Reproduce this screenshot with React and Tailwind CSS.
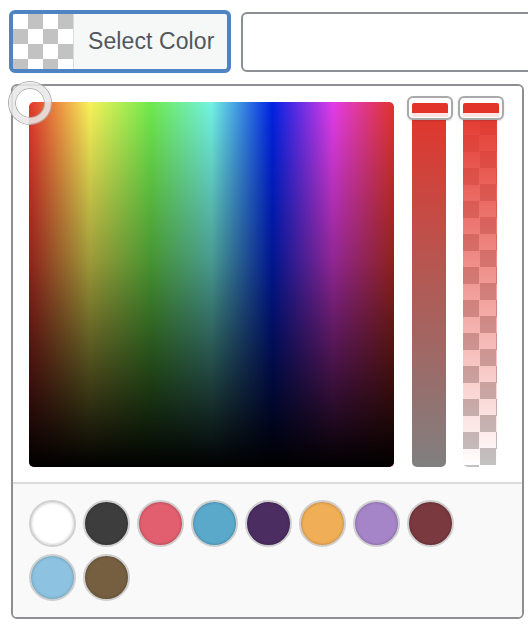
import React from "react";

const palette = [
  "#ffffff",
  "#3d3d3d",
  "#e15f6e",
  "#5aa9cb",
  "#4b2d62",
  "#f0ae57",
  "#a584c8",
  "#7a393e",
  "#8dc3e0",
  "#755f40",
];

function Handle() {
  return (
    <div className="absolute -top-[6px] -left-[5px] w-[46px] h-[24px] rounded-[6px] border-2 border-[#a9a9a9] bg-white pt-[5px] px-[3px] pb-[1px] shadow-[0_1px_2px_rgba(0,0,0,0.15)]">
      <div className="h-[10px] bg-[#e3342a] rounded-t-[2px]" />
      <div className="h-[4px] bg-[#fde3e1]" />
    </div>
  );
}

export default function App() {
  return (
    <div
      className="w-[528px] h-[624px] overflow-hidden bg-white relative"
      style={{ fontFamily: '"Liberation Sans", Arial, sans-serif' }}
    >
      <div className="flex items-center pt-[10px] pl-[9px] gap-[10px]">
        <div className="flex-none w-[222px] h-[63px] border-[4px] border-[#4f84c4] rounded-[6px] bg-[#f6f7f7] flex items-center overflow-hidden">
          <div className="w-[61px] h-full bg-[conic-gradient(#c2c2c2_25%,#fff_0_50%,#c2c2c2_0_75%,#fff_0)] bg-[length:30px_30px] border-r border-[#dcdcde]" />
          <span className="ml-[14px] text-[23px] text-[#50575e] tracking-[0.1px]">Select Color</span>
        </div>
        <div className="flex-none w-[320px] h-[60px] border-2 border-[#8c8f94] rounded-[6px] bg-white" />
      </div>

      <div className="ml-[11px] mt-[11px] w-[513px] border-2 border-[#8e8f94] rounded-[6px] relative">
        <div className="flex pt-[16px] pl-[16px] pb-[15px] bg-white rounded-t-[4px]">
          <div className="relative w-[365px] h-[365px] flex-none">
            <div className="w-full h-full rounded-[5px] overflow-hidden bg-[linear-gradient(to_right,#e3352c,#f8f25a,#6fe94d,#72f2e3,#0022e3,#e33ce8,#e0342c)]">
              <div className="w-full h-full bg-[linear-gradient(to_bottom,rgba(0,0,0,0)_0%,rgba(0,0,0,0.36)_43%,#000_100%)]" />
            </div>
            <div className="absolute -left-[20px] -top-[20px] w-[42px] h-[42px] rounded-full border-[6px] border-[rgba(232,232,232,0.88)] shadow-[0_0_0_1px_#aeaeae,inset_0_0_0_1px_#aeaeae] z-10" />
          </div>
          <div className="relative ml-[18px] w-[34px] h-[365px] flex-none">
            <div className="w-full h-full rounded-[5px] bg-[linear-gradient(to_bottom,#e3342a,#808080)]" />
            <Handle />
          </div>
          <div className="relative ml-[17px] w-[34px] h-[365px] flex-none">
            <div className="w-full h-full rounded-[5px] overflow-hidden bg-[conic-gradient(#fff_25%,#c2c2c2_0_50%,#fff_0_75%,#c2c2c2_0)] bg-[length:33px_33px]">
              <div className="w-full h-full bg-[linear-gradient(to_bottom,rgba(227,52,42,1),rgba(227,52,42,0))]" />
            </div>
            <Handle />
          </div>
        </div>
        <div className="border-t-2 border-[#dcdcde] bg-[#f9f9f9] rounded-b-[4px] pt-[16px] pb-[16px] pl-[16px]">
          <div className="flex flex-wrap gap-[7px] w-[425px]">
            {palette.map((c) => (
              <div
                key={c}
                className="w-[47px] h-[47px] rounded-full border-2 border-[#cfcfcf] shadow-[inset_0_0_3px_rgba(0,0,0,0.3)]"
                style={{ backgroundColor: c }}
              />
            ))}
          </div>
        </div>
      </div>
    </div>
  );
}
